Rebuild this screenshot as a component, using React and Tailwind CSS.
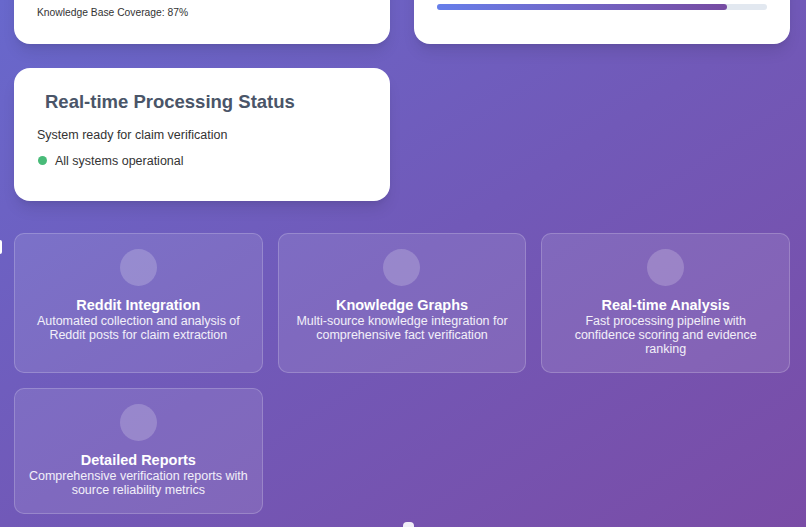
const features = [
  {
    title: "Reddit Integration",
    text: "Automated collection and analysis of Reddit posts for claim extraction",
  },
  {
    title: "Knowledge Graphs",
    text: "Multi-source knowledge integration for comprehensive fact verification",
  },
  {
    title: "Real-time Analysis",
    text: "Fast processing pipeline with confidence scoring and evidence ranking",
  },
  {
    title: "Detailed Reports",
    text: "Comprehensive verification reports with source reliability metrics",
  },
];

const App = () => {
  return (
    <div className="relative h-[527px] w-full overflow-hidden bg-gradient-to-br from-[#6868cc] via-[#7159b8] to-[#7a4ca6] font-['Liberation_Sans',Arial,sans-serif]">
      <div className="pl-[14px] pr-[16px]">
        {/* Top stats row (scrolled partly out of view) */}
        <div className="-mt-[96px] grid grid-cols-2 gap-6">
          <div className="flex h-[140px] flex-col justify-end rounded-2xl bg-white px-[23px] pb-[24px] shadow-lg">
            <p className="text-[10.3px] text-[#333]">Knowledge Base Coverage: 87%</p>
          </div>
          <div className="flex h-[140px] flex-col justify-end rounded-2xl bg-white px-[23px] pb-[34px] shadow-lg">
            <div className="h-[6px] w-full rounded-full bg-[#e2e8f0]">
              <div className="h-full w-[88%] rounded-full bg-gradient-to-r from-[#667eea] to-[#764ba2]" />
            </div>
          </div>
        </div>

        {/* Processing status */}
        <div className="mt-6 grid grid-cols-2 gap-6">
          <div className="h-[133px] rounded-2xl bg-white px-[23px] pt-[20px] shadow-lg">
            <h2 className="pl-[8px] text-[18.5px] font-bold text-[#4a5568]">
              Real-time Processing Status
            </h2>
            <p className="mt-[10px] text-[12.5px] text-[#333]">
              System ready for claim verification
            </p>
            <div className="mt-[7px] flex items-center gap-[8px] pl-[1px]">
              <span className="h-[9px] w-[9px] rounded-full bg-[#48bb78]" />
              <span className="text-[12.5px] text-[#333]">All systems operational</span>
            </div>
          </div>
        </div>

        {/* Feature cards */}
        <div className="mt-8 grid grid-cols-3 gap-x-[15px] gap-y-[15px]">
          {features.map((f) => (
            <div
              key={f.title}
              className="flex flex-col items-center rounded-[10px] border border-white/20 bg-white/10 px-[13px] pb-4 pt-[15px] text-center text-white"
            >
              <div className="h-[37px] w-[37px] rounded-full bg-white/20" />
              <h3 className="mt-[11px] text-[14.5px] font-bold leading-[17px]">{f.title}</h3>
              <p className="text-[12.5px] leading-[14px] text-white/90">{f.text}</p>
            </div>
          ))}
        </div>
      </div>

      {/* partially visible controls at the edges */}
      <div className="absolute left-0 top-[240px] h-[14px] w-[2px] rounded-r bg-white" />
      <div className="absolute left-[403px] top-[522px] h-[12px] w-[11px] rounded-t-[4px] bg-white/90" />
    </div>
  );
};

export default App;
